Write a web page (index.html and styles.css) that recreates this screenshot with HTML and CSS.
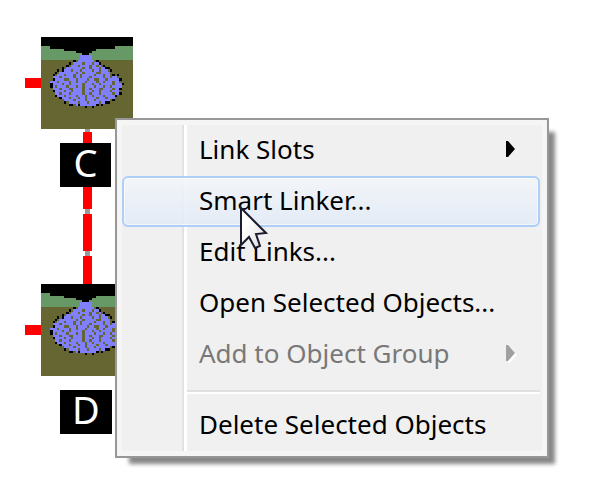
FILE: index.html
```html
<!DOCTYPE html>
<html lang="en">
<head>
  <meta charset="UTF-8" />
  <meta name="viewport" content="width=device-width, initial-scale=1.0"/>
  <title>Object context menu</title>
  <link rel="stylesheet" href="styles.css">
</head>
<body>
  <!-- shared drawing for the reservoir objects -->
  <svg class="defs" aria-hidden="true">
    <symbol id="object-icon" viewBox="0 0 40 40" shape-rendering="crispEdges">
      <rect width="40" height="40" fill="#666633"/>
      <rect width="40" height="10" fill="#669966"/>
      <path d="M0 0H40V4H32V5H24V6H22V7H21V8H18V7H15V6H10V5H4V4H0Z" fill="#000"/>
      <path d="M17 8H22V10H23V11H25V12H26V13H28V14H29V15H30V16H32V17H33V18H34V20H35V23H34V25H33V26H32V27H30V28H28V29H25V30H15V29H12V28H10V27H8V26H6V24H5V22H4V19H5V17H7V16H8V15H10V14H11V13H13V12H14V11H16V10H17Z" fill="#8080ff"/>
      <g fill="none" stroke="#666633" stroke-width="1">
        <path d="M18 11.5H24" stroke-dasharray="1 3"/>
        <path d="M16 12.5H25" stroke-dasharray="1 4 1 2"/>
        <path d="M18 13.5H26" stroke-dasharray="1 2 1 3"/>
        <path d="M13 14.5H28" stroke-dasharray="1 3 1 4 1 2"/>
        <path d="M15 15.5H29" stroke-dasharray="1 2 1 5 2 3"/>
        <path d="M10 16.5H31" stroke-dasharray="1 3 1 2 1 5"/>
        <path d="M8 17.5H32" stroke-dasharray="1 5 1 2 1 3"/>
        <path d="M10 18.5H33" stroke-dasharray="2 3 1 4 1 2"/>
        <path d="M7 19.5H33" stroke-dasharray="1 4 1 2 1 3"/>
        <path d="M9 20.5H34" stroke-dasharray="1 2 1 5 1 3"/>
        <path d="M6 21.5H33" stroke-dasharray="1 4 1 3 1 2"/>
        <path d="M8 22.5H34" stroke-dasharray="1 3 2 4 1 2"/>
        <path d="M10 23.5H33" stroke-dasharray="1 2 1 4 1 3"/>
        <path d="M8 24.5H32" stroke-dasharray="1 3 1 5 1 2"/>
        <path d="M10 25.5H31" stroke-dasharray="1 4 1 3 1 2"/>
        <path d="M12 26.5H30" stroke-dasharray="1 3 1 2 1 4"/>
        <path d="M14 27.5H28" stroke-dasharray="1 4 1 3"/>
        <path d="M16 28.5H27" stroke-dasharray="1 3 1 4"/>
      </g>
      <path d="M14 10h1v1h-1zM24 10h1v1h-1zM12 11h1v1h-1zM25 11h1v1h-1zM11 12h1v1h-1zM27 12h1v1h-1zM9 13h1v2h-1zM28 13h2v1h-2zM7 14h1v1h-1zM30 14h1v1h-1zM6 15h1v1h-1zM31 16h1v1h-1zM5 16h1v1h-1zM33 16h1v1h-1zM5 18h1v1h-1zM34 18h1v1h-1zM4 20h1v2h-1zM35 20h1v1h-1zM5 23h1v1h-1zM34 22h1v1h-1zM6 25h1v1h-1zM34 24h1v1h-1zM8 26h1v1h-1zM32 25h1v1h-1zM10 28h1v1h-1zM31 27h1v1h-1zM12 29h2v1h-2zM28 28h2v1h-2zM16 29h1v1h-1zM26 29h1v1h-1zM19 30h1v1h-1zM22 30h1v1h-1zM24 29h1v1h-1z" fill="#000"/>
    </symbol>
  </svg>

  <main class="workspace">
    <div class="link link-in link-in-c"></div>
    <div class="link link-in link-in-d"></div>
    <div class="link link-down">
      <span class="dash dash-long"></span>
      <span class="dash"></span>
      <span class="dash dash-short"></span>
    </div>

    <figure class="node node-c">
      <svg class="node-icon" aria-hidden="true"><use href="#object-icon"/></svg>
      <figcaption class="node-label">C</figcaption>
    </figure>
    <figure class="node node-d">
      <svg class="node-icon" aria-hidden="true"><use href="#object-icon"/></svg>
      <figcaption class="node-label">D</figcaption>
    </figure>

    <div class="menu" role="menu">
      <div class="menu-body">
        <button class="item" role="menuitem">Link Slots
          <svg class="arrow" viewBox="0 0 9 16" aria-hidden="true"><path d="M0 0H2L9 8L2 16H0Z"/></svg>
        </button>
        <button class="item active" role="menuitem">Smart Linker...</button>
        <button class="item" role="menuitem">Edit Links...</button>
        <button class="item" role="menuitem">Open Selected Objects...</button>
        <button class="item" role="menuitem" disabled>Add to Object Group
          <svg class="arrow" viewBox="0 0 9 16" aria-hidden="true"><path class="arrow-light" d="M2 2H4L11 10L4 18H2Z"/><path d="M0 0H2L9 8L2 16H0Z"/></svg>
        </button>
        <hr class="separator">
        <button class="item" role="menuitem">Delete Selected Objects</button>
      </div>
    </div>

    <svg class="cursor" viewBox="0 0 28 44" aria-hidden="true">
      <defs>
        <linearGradient id="cursor-fill" x1="0" y1="0" x2="1" y2="1">
          <stop offset="0.3" stop-color="#fff"/>
          <stop offset="1" stop-color="#dcdcdc"/>
        </linearGradient>
      </defs>
      <path d="M1 2V39L9 31L15 42L20 40L16 28L26 27Z" fill="url(#cursor-fill)" stroke="#1c1c30" stroke-width="2"/>
    </svg>
  </main>
</body>
</html>
```
FILE: styles.css
```css
* {
  box-sizing: border-box;
  margin: 0;
  padding: 0;
}
body {
  font-family: "Noto Sans", "Open Sans", sans-serif;
  background: #fff;
  color: #000;
}
.defs {
  position: absolute;
  width: 0;
  height: 0;
}
.workspace {
  position: relative;
  min-height: 100vh;
  overflow: hidden;
}

/* objects on the canvas */
.node {
  position: absolute;
  left: 41px;
  width: 92px;
}
.node-c {
  top: 37px;
}
.node-d {
  top: 284px;
}
.node-icon {
  display: block;
  width: 92px;
  height: 92px;
}
.node-label {
  width: max-content;
  min-width: 51px;
  margin: 14px 0 0 19px;
  padding: 0 12px;
  background: #000;
  color: #fff;
  font-size: 38px;
  line-height: 38px;
  text-align: center;
  height: 44px;
}

/* links between objects */
.link {
  position: absolute;
}
.link-in {
  left: 25px;
  width: 16px;
  height: 10px;
  background: #f00;
}
.link-in-c {
  top: 78px;
}
.link-in-d {
  top: 325px;
}
.link-down {
  display: flex;
  flex-direction: column;
  gap: 5px;
  left: 83px;
  top: 129px;
  width: 9px;
  height: 156px;
  padding-top: 3px;
  background: linear-gradient(#999, #999) center / 5px 100% no-repeat;
}
.dash {
  height: 37px;
  background: #f00;
}
.dash-long {
  height: 78px;
}
.dash-short {
  height: 29px;
}

/* context menu */
.menu {
  position: absolute;
  left: 115px;
  top: 118px;
  min-width: 434px;
  padding: 5px;
  background: #f5f5f5;
  border: 2px solid #979797;
  box-shadow: 10px 10px 4px -4px #888;
}
.menu-body {
  display: flex;
  flex-direction: column;
  padding-right: 2px;
  background: linear-gradient(90deg, transparent 60px, #e2e2e2 60px, #e2e2e2 62px, #fff 62px, #fff 65px, transparent 65px) #f0f0f0;
}
.item {
  display: flex;
  align-items: center;
  justify-content: space-between;
  height: 51px;
  padding: 0 23px 3px 75px;
  background: none;
  border: 2px solid transparent;
  border-radius: 6px;
  color: #000;
  font-family: inherit;
  font-size: 26px;
  line-height: 32px;
  text-align: left;
}
.item.active {
  background: linear-gradient(rgba(243, 245, 249, 0.9), rgba(226, 235, 247, 0.9));
  border-color: #aecff7;
  box-shadow: inset 0 0 0 1px rgba(255, 255, 255, 0.5);
}
.item:disabled {
  color: #787878;
}
.arrow {
  width: 9px;
  height: 16px;
  overflow: visible;
}
.item:disabled .arrow {
  fill: #a0a0a0;
}
.item:disabled .arrow-light {
  fill: #fff;
}
.separator {
  height: 5px;
  margin: 10px 0 5px 65px;
  border: 0;
  border-top: 2px solid #e0e0e0;
  background: linear-gradient(#fff 2px, transparent 2px);
}

.cursor {
  position: absolute;
  left: 240px;
  top: 206px;
  width: 28px;
  height: 44px;
}
```
